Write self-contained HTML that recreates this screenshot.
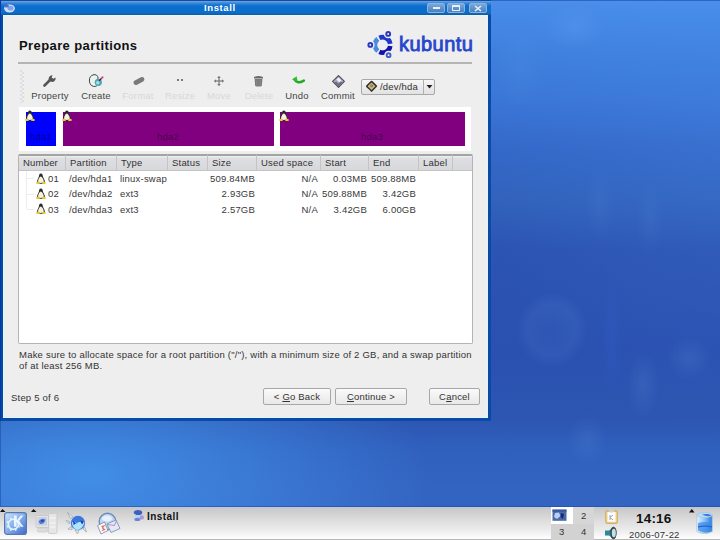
<!DOCTYPE html>
<html><head><meta charset="utf-8">
<style>
*{margin:0;padding:0;box-sizing:border-box}
html,body{width:720px;height:540px;overflow:hidden}
body{position:relative;font-family:"Liberation Sans",sans-serif;font-size:9.5px;letter-spacing:0.2px;color:#222;
background:
 radial-gradient(ellipse 340px 170px at 90px 475px, rgba(75,170,255,0.6), rgba(75,170,255,0) 100%),
 radial-gradient(ellipse 260px 300px at 740px 140px, rgba(90,160,255,0.14), rgba(90,160,255,0) 100%),
 linear-gradient(180deg,#4a8ee9 0px,#4488e6 20px,#3e7edc 60px,#3a76d6 100px,#3468c8 150px,#3162bc 200px,#2c54b2 250px,#2a50b0 350px,#2d56b2 420px,#3060be 450px,#3464c2 490px,#3464c2 540px);}
.a{position:absolute}
.t{position:absolute;white-space:nowrap;line-height:1}
#win{left:0;top:0;width:491px;height:421px;background:#0a4aa6}
#title{left:0;top:0;width:491px;height:15px;
background:linear-gradient(180deg,#1a4a90 0px,#1a4a90 1px,#6aa8f0 1px,#5096e4 2px,#2a7ed6 4px,#0a6ecc 6px,#0a6ecc 13px,#1a5aa0 14px,#1a5aa0 15px)}
#content{left:3px;top:15px;width:485px;height:403px;background:#eeeeee;border:1px solid #dcf8ff;border-top:1px solid #e0f8ff}
.tb{position:absolute;top:90px;font-size:9.5px;color:#444;text-align:center;white-space:nowrap;line-height:12px}
.dis{color:#d8d8d8}
.th{position:absolute;top:155px;height:16px;line-height:15px;color:#333;padding-left:4px;border-right:1px solid #c4c4c4;white-space:nowrap}
.row{position:absolute;left:0;width:100%;height:16px;line-height:16px;color:#383838}
.c{position:absolute;white-space:nowrap}
.r{text-align:right}
.btn{position:absolute;top:388px;height:17px;border:1px solid #a8a8a8;border-radius:2px;background:linear-gradient(180deg,#fafafa,#e8e8e8);text-align:center;line-height:15px;color:#333}
</style></head>
<body>
<svg width="0" height="0" style="position:absolute"><defs>
 <symbol id="tux" viewBox="0 0 9 10">
  <path d="M4.4 0.4 C5.7 0.4 6.1 1.6 6.1 2.8 C6.3 4.2 8.1 6.2 8.1 8.1 C8.1 9.2 6.8 9.7 4.5 9.7 C2.2 9.7 0.9 9.2 0.9 8.1 C0.9 6.2 2.5 4.2 2.7 2.8 C2.7 1.6 3.1 0.4 4.4 0.4 Z" fill="#2a2a2a"/>
  <path d="M4.3 3.2 C5.3 3.2 7 5.8 7 7.8 C7 8.8 6 9.1 4.3 9.1 C2.8 9.1 1.8 8.8 1.8 7.8 C1.8 5.8 3.3 3.2 4.3 3.2 Z" fill="#f6f2dc"/>
  <path d="M0 8.6 L2.2 7.4 L3.6 9.9 L0.4 9.9 Z M8.9 8.6 L6.8 7.4 L5.4 9.9 L8.6 9.9 Z" fill="#e6c830"/>
 </symbol>
</defs></svg>
<div class="a" style="left:0;top:0;width:720px;height:507px;pointer-events:none;background:
 radial-gradient(ellipse 34px 36px at 552px 330px, rgba(140,190,255,0.04) 0px, rgba(140,190,255,0.08) 24px, rgba(140,190,255,0) 36px),
 radial-gradient(ellipse 30px 22px at 575px 28px, rgba(140,200,255,0.12), rgba(140,200,255,0)),
 radial-gradient(ellipse 26px 40px at 520px 70px, rgba(140,200,255,0.06), rgba(140,200,255,0)),
 radial-gradient(ellipse 16px 34px at 643px 385px, rgba(140,200,255,0.10), rgba(140,200,255,0)),
 radial-gradient(ellipse 22px 22px at 689px 358px, rgba(140,200,255,0.10), rgba(140,200,255,0)),
 radial-gradient(ellipse 20px 26px at 587px 440px, rgba(140,200,255,0.09), rgba(140,200,255,0)),
 radial-gradient(ellipse 10px 60px at 612px 340px, rgba(60,110,240,0.12), rgba(60,110,240,0)),
 radial-gradient(ellipse 14px 36px at 600px 205px, rgba(140,200,255,0.06), rgba(140,200,255,0)),
 radial-gradient(ellipse 14px 36px at 650px 220px, rgba(140,200,255,0.06), rgba(140,200,255,0))"></div>
<div id="win" class="a">
 <div id="title" class="a"></div>
 <div id="content" class="a"></div>
 <div class="t" style="left:204px;top:3px;font-weight:bold;font-size:9.5px;letter-spacing:0.6px;color:#fff;">Install</div>
 <!-- title buttons -->
 <div class="a" style="left:427px;top:3px;width:18px;height:10px;border-radius:2px;background:linear-gradient(180deg,#7aa8d8,#4a80c0);border:1px solid #8ab4e0"></div>
 <div class="a" style="left:447px;top:3px;width:18px;height:10px;border-radius:2px;background:linear-gradient(180deg,#7aa8d8,#4a80c0);border:1px solid #8ab4e0"></div>
 <div class="a" style="left:469px;top:3px;width:18px;height:10px;border-radius:2px;background:linear-gradient(180deg,#7aa8d8,#4a80c0);border:1px solid #8ab4e0"></div>
 <div class="a" style="left:433px;top:7px;width:7px;height:2px;background:#e8f0f8"></div>
 <div class="a" style="left:452px;top:5px;width:8px;height:6px;border:1px solid #e8f0f8;border-top-width:2px"></div>
 <svg class="a" style="left:474px;top:5px" width="8" height="7"><path d="M1 1 L7 6 M7 1 L1 6" stroke="#e8f0f8" stroke-width="1.6"/></svg>
 <svg class="a" style="left:3px;top:3px" width="13" height="10" viewBox="0 0 13 10">
  <ellipse cx="6.5" cy="5.4" rx="5.4" ry="4" fill="#c8e0ff"/>
  <ellipse cx="7.5" cy="5.2" rx="3" ry="2.4" fill="#8aa0e0"/>
  <ellipse cx="3.6" cy="3" rx="2.4" ry="1.6" fill="#4a70c8"/>
 </svg>
 <!-- header -->
 <div class="t" style="left:19px;top:39px;font-weight:bold;font-size:13px;color:#111;letter-spacing:0.4px">Prepare partitions</div>
 <div class="a" style="left:18px;top:62px;width:454px;height:2px;background:#b4b4b4"></div>
 <!-- logo text -->
 <div class="t" style="left:399px;top:33.5px;font-weight:normal;font-size:20px;line-height:20px;letter-spacing:0.45px;color:#2848d0;-webkit-text-stroke:0.85px #2846cc">kubuntu</div>
 <svg class="a" style="left:364px;top:28px" width="36" height="32" viewBox="364 28 36 32">
  <g fill="none" stroke-width="4.6">
   <path d="M 377.86 38.83 A 7.7 7.7 0 0 0 377.86 50.97" stroke="#4a8ae0"/>
   <path d="M 379.35 37.92 A 7.7 7.7 0 0 1 390.22 43.83" stroke="#2038d0"/>
   <path d="M 390.22 45.97 A 7.7 7.7 0 0 1 379.35 51.88" stroke="#1410b0"/>
  </g>
  <g fill="#fff" stroke-width="1.7">
   <circle cx="370.3" cy="44.9" r="3.6" stroke="#eeeeee" stroke-width="1.5"/>
   <circle cx="388.2" cy="33.9" r="3.6" stroke="#eeeeee" stroke-width="1.5"/>
   <circle cx="388.6" cy="55.2" r="3.6" stroke="#eeeeee" stroke-width="1.5"/>
   <circle cx="370.3" cy="44.9" r="1.9" stroke="#2838b8" stroke-width="2"/>
   <circle cx="388.2" cy="33.9" r="1.9" stroke="#2838b8" stroke-width="2"/>
   <circle cx="388.6" cy="55.2" r="1.9" stroke="#4060c8" stroke-width="2"/>
  </g>
 </svg>
 <!-- toolbar -->
 <div class="tb" style="left:30px;width:40px">Property</div>
 <div class="tb" style="left:76px;width:40px">Create</div>
 <div class="tb dis" style="left:118px;width:40px">Format</div>
 <div class="tb dis" style="left:160px;width:40px">Resize</div>
 <div class="tb dis" style="left:199px;width:40px">Move</div>
 <div class="tb dis" style="left:239px;width:40px">Delete</div>
 <div class="tb" style="left:277px;width:40px">Undo</div>
 <div class="tb" style="left:318px;width:40px">Commit</div>
 <!-- combobox -->
 <div class="a" style="left:361px;top:79px;width:74px;height:16px;border:1px solid #a8a8a8;border-radius:2px;background:linear-gradient(180deg,#f6f6f6,#e2e2e2)"></div>
 <div class="a" style="left:423px;top:80px;width:1px;height:14px;background:#b0b0b0"></div>
 <div class="t" style="left:380px;top:82px;color:#333">/dev/hda</div>

 <!-- toolbar handle -->
 <div class="a" style="left:20px;top:70px;width:4px;height:33px;background-image:radial-gradient(circle at 1px 1px,#dedede 0.9px,transparent 1.1px),radial-gradient(circle at 3px 3px,#dedede 0.9px,transparent 1.1px);background-size:4px 4px"></div>
 <!-- wrench -->
 <svg class="a" style="left:43px;top:74px" width="14" height="13" viewBox="0 0 14 13">
  <path d="M1.5 11.5 L7 6" stroke="#555" stroke-width="2.6" stroke-linecap="round"/>
  <path d="M6.2 6.8 A3.6 3.6 0 0 1 9.6 1.2 L8.6 3.4 L10.3 4.8 L12.6 3.6 A3.6 3.6 0 0 1 7.6 7.6 Z" fill="#555"/>
 </svg>
 <!-- create -->
 <svg class="a" style="left:88px;top:73px" width="17" height="15" viewBox="0 0 17 15">
  <path d="M3.6 2.6 Q6 0.8 8.4 2 Q10.4 3.2 10 6 L10.2 10.5 Q9 14 5.6 13.4 Q3 13 2 10.6 Q1 8.2 1.6 5.4 Q2 3.6 3.6 2.6 Z" fill="#eaf4ec" stroke="#454545" stroke-width="1"/>
  <circle cx="10.3" cy="9.3" r="3.6" fill="#4aa8b8"/>
  <circle cx="9.8" cy="9.8" r="1.8" fill="#a0e0e6"/>
  <path d="M11.6 7.2 L14.6 4.2" stroke="#6a1a3a" stroke-width="1.6" stroke-linecap="round"/>
  <circle cx="14.2" cy="4.6" r="1.6" fill="#e8a0b8" opacity="0.5"/>
 </svg>
 <!-- format (disabled eraser) -->
 <svg class="a" style="left:132px;top:76px" width="14" height="10" viewBox="0 0 14 10">
  <rect x="1.2" y="2.6" width="11.6" height="4.8" rx="2.4" transform="rotate(-28 7 5)" fill="#7a7a7a"/>
 </svg>
 <!-- resize dots -->
 <div class="a" style="left:177px;top:79px;width:2px;height:2px;background:#7a7a7a"></div>
 <div class="a" style="left:181px;top:79px;width:2px;height:2px;background:#7a7a7a"></div>
 <!-- move -->
 <svg class="a" style="left:213px;top:75px" width="12" height="12" viewBox="0 0 12 12">
  <g fill="#787878">
   <path d="M6 0.8 L7.8 3 L4.2 3 Z"/><path d="M6 11.2 L7.8 9 L4.2 9 Z"/><path d="M0.8 6 L3 4.2 L3 7.8 Z"/><path d="M11.2 6 L9 4.2 L9 7.8 Z"/>
   <rect x="5.4" y="3" width="1.2" height="6"/><rect x="3" y="5.4" width="6" height="1.2"/>
  </g>
 </svg>
 <!-- trash -->
 <svg class="a" style="left:253px;top:75px" width="11" height="12" viewBox="0 0 11 12">
  <path d="M1 2 Q5.5 0 10 2 L10 3.4 L1 3.4 Z" fill="#6c6c6c"/>
  <path d="M1.6 4 L9.4 4 L8.8 11 Q5.5 12.2 2.2 11 Z" fill="#7a7a7a"/>
  <path d="M3.8 5 L4 10.5 M7.2 5 L7 10.5" stroke="#8e8e8e" stroke-width="0.8"/>
 </svg>
 <!-- undo -->
 <svg class="a" style="left:291px;top:75px" width="14" height="10" viewBox="0 0 14 10">
  <path d="M3.5 4.5 Q6 9.5 12.8 5.6" fill="none" stroke="#22a822" stroke-width="2.6" stroke-linecap="round"/>
  <path d="M1 4.6 L5.6 1.2 L6.8 6.8 Z" fill="#2cc02c"/>
 </svg>
 <!-- commit (diamond floppy) -->
 <svg class="a" style="left:332px;top:75px" width="13" height="13" viewBox="0 0 13 13">
  <path d="M6.5 0.6 L12.4 6.4 L6.5 12.4 L0.6 6.4 Z" fill="#a8a8c4" stroke="#505058" stroke-width="1.2" stroke-linejoin="round"/>
  <path d="M6.6 2.4 L9.6 5.4 L7.4 7.6 L4.4 4.6 Z" fill="#f0f0fa"/>
  <path d="M2.6 7.6 L6.5 11.4 L10.4 7.6 L8.6 6.4 L6.2 8.8 L4.2 6.6 Z" fill="#6a6a80"/>
 </svg>
 <!-- combobox hd icon -->
 <svg class="a" style="left:365px;top:80px" width="13" height="13" viewBox="0 0 13 13">
  <path d="M6.5 0.8 Q6.9 0.6 7.4 1.1 L11.9 5.6 Q12.4 6.1 11.9 6.8 L7.2 11.6 Q6.6 12.2 5.9 11.6 L1.2 6.9 Q0.6 6.3 1.2 5.6 L5.8 1.1 Z" fill="#3a3428"/>
  <path d="M6.5 2.4 L10.4 6.2 L6.5 10 L2.6 6.2 Z" fill="#cbbb90"/>
  <circle cx="6.6" cy="5.8" r="1.6" fill="#9a8450"/>
  <path d="M2.4 8.4 L5.6 11.4" stroke="#e8e8e8" stroke-width="0.8" opacity="0.6"/>
 </svg>
 <svg class="a" style="left:426px;top:85px" width="7" height="4" viewBox="0 0 7 4"><path d="M0.5 0 L6.5 0 L3.5 3.5 Z" fill="#222"/></svg>
 <!-- partition bar -->
 <div class="a" style="left:19px;top:107px;width:452px;height:44px;background:#fff"></div>
 <div class="a" style="left:26px;top:112px;width:30px;height:34px;background:#0000ff"></div>
 <div class="a" style="left:63px;top:112px;width:211px;height:34px;background:#800080"></div>
 <div class="a" style="left:280px;top:112px;width:185px;height:34px;background:#800080"></div>
 <div class="t" style="left:30px;top:132px;color:rgba(0,0,60,0.55)">hda1</div>
 <div class="t" style="left:157px;top:132px;color:rgba(40,0,40,0.6)">hda2</div>
 <div class="t" style="left:361px;top:132px;color:rgba(40,0,40,0.6)">hda3</div>
 <!-- table -->
 <div class="a" style="left:18px;top:154px;width:455px;height:190px;background:#fff;border:1px solid #b4b4b4;border-top:2px solid #a4a4a4;border-radius:2px"></div>
 <div class="a" style="left:19px;top:156px;width:453px;height:15px;background:linear-gradient(180deg,#eaecea 0px,#eaecea 1px,#dfdfe3 2px,#d6d8da 14px);border-bottom:1px solid #c4c4c4"></div>
 <div class="th" style="left:19px;width:47px">Number</div>
 <div class="th" style="left:66px;width:51px">Partition</div>
 <div class="th" style="left:117px;width:51px">Type</div>
 <div class="th" style="left:168px;width:40px">Status</div>
 <div class="th" style="left:208px;width:49px">Size</div>
 <div class="th" style="left:257px;width:64px">Used space</div>
 <div class="th" style="left:321px;width:48px">Start</div>
 <div class="th" style="left:369px;width:50px">End</div>
 <div class="th" style="left:419px;width:34px">Label</div>
 <div class="th" style="left:453px;width:19px;border-right:none"></div>
 <div class="a" style="left:0;top:171px;width:491px;height:50px">
  <div class="row" style="top:0">
   <span class="c" style="left:48px">01</span><span class="c" style="left:69px">/dev/hda1</span><span class="c" style="left:120px">linux-swap</span>
   <span class="c r" style="left:200px;width:55px">509.84MB</span><span class="c r" style="left:260px;width:58px">N/A</span>
   <span class="c r" style="left:320px;width:47px">0.03MB</span><span class="c r" style="left:368px;width:48px">509.88MB</span>
  </div>
  <div class="row" style="top:15px">
   <span class="c" style="left:48px">02</span><span class="c" style="left:69px">/dev/hda2</span><span class="c" style="left:120px">ext3</span>
   <span class="c r" style="left:200px;width:55px">2.93GB</span><span class="c r" style="left:260px;width:58px">N/A</span>
   <span class="c r" style="left:320px;width:47px">509.88MB</span><span class="c r" style="left:368px;width:48px">3.42GB</span>
  </div>
  <div class="row" style="top:31px">
   <span class="c" style="left:48px">03</span><span class="c" style="left:69px">/dev/hda3</span><span class="c" style="left:120px">ext3</span>
   <span class="c r" style="left:200px;width:55px">2.57GB</span><span class="c r" style="left:260px;width:58px">N/A</span>
   <span class="c r" style="left:320px;width:47px">3.42GB</span><span class="c r" style="left:368px;width:48px">6.00GB</span>
  </div>
 </div>

 <!-- tree lines + tux -->
 <div class="a" style="left:26px;top:171px;width:1px;height:38px;border-left:1px solid #ececec"></div>
 <div class="a" style="left:27px;top:178px;width:7px;height:1px;border-top:1px solid #ececec"></div>
 <div class="a" style="left:27px;top:194px;width:7px;height:1px;border-top:1px solid #ececec"></div>
 <div class="a" style="left:27px;top:209px;width:7px;height:1px;border-top:1px solid #ececec"></div>
 <svg class="a" style="left:36px;top:173px" width="10" height="11"><use href="#tux" width="10" height="11"/></svg>
 <svg class="a" style="left:36px;top:188px" width="10" height="11"><use href="#tux" width="10" height="11"/></svg>
 <svg class="a" style="left:36px;top:203px" width="10" height="11"><use href="#tux" width="10" height="11"/></svg>
 <svg class="a" style="left:25px;top:110px" width="10" height="11"><use href="#tux" width="10" height="11"/></svg>
 <svg class="a" style="left:62px;top:110px" width="10" height="11"><use href="#tux" width="10" height="11"/></svg>
 <svg class="a" style="left:279px;top:110px" width="10" height="11"><use href="#tux" width="10" height="11"/></svg>
 <!-- info text -->
 <div class="t" style="left:19px;top:349px;color:#333;line-height:11px;letter-spacing:0.22px">Make sure to allocate space for a root partition ("/"), with a minimum size of 2 GB, and a swap partition<br>of at least 256 MB.</div>
 <div class="t" style="left:11px;top:393px;color:#333">Step 5 of 6</div>
 <div class="btn" style="left:263px;width:68px">&lt; <u>G</u>o Back</div>
 <div class="btn" style="left:335px;width:72px"><u>C</u>ontinue &gt;</div>
 <div class="btn" style="left:429px;width:51px">C<u>a</u>ncel</div>
</div>
<div class="a" style="left:0;top:0;width:1px;height:421px;background:#0838a0"></div>
<div class="a" style="left:491px;top:0;width:229px;height:1px;background:rgba(20,70,170,0.55)"></div>
<div class="a" style="left:0;top:421px;width:1px;height:85px;background:rgba(20,70,170,0.5)"></div>
<!-- taskbar -->
<div class="a" style="left:0;top:506px;width:720px;height:1px;background:rgba(30,70,150,0.5)"></div>
<div class="a" style="left:0;top:507px;width:720px;height:33px;background:linear-gradient(180deg,#bcc6dc 0px,#c8c8c8 1.5px,#cacaca 2px,#d4d4d4 8px,#e0e0e0 15px,#ececec 23px,#f6f6f6 28px,#fcfcfc 31px,#fcfcfc 32px,#b8b8b8 32px)"></div>
<div class="t" style="left:147px;top:512px;font-weight:bold;font-size:10px;letter-spacing:0.45px;color:#111">Install</div>
<div class="a" style="left:551px;top:507px;width:22px;height:17px;background:#fff"></div>
<div class="a" style="left:573px;top:507px;width:21px;height:17px;background:#d6d6d6"></div>
<div class="a" style="left:551px;top:524px;width:22px;height:16px;background:#d2d2d2"></div>
<div class="a" style="left:573px;top:524px;width:21px;height:16px;background:#d2d2d2"></div>
<div class="t" style="left:581px;top:511px;color:#333">2</div>
<div class="t" style="left:559px;top:527px;color:#333">3</div>
<div class="t" style="left:581px;top:527px;color:#333">4</div>
<div class="t" style="left:636px;top:512px;font-weight:bold;font-size:13.5px;color:#111">14:16</div>
<div class="t" style="left:629px;top:530px;color:#333">2006-07-22</div>
<!-- taskbar icons -->
<svg class="a" style="left:0;top:509px" width="6" height="3"><path d="M0 3 L2.5 0 L5.5 3 Z" fill="#111"/></svg>
<svg class="a" style="left:31px;top:509px" width="6" height="3"><path d="M0 3 L2.5 0 L5.5 3 Z" fill="#111"/></svg>
<svg class="a" style="left:4px;top:512px" width="23" height="23" viewBox="0 0 23 23">
 <defs><linearGradient id="kg" x1="0" y1="0" x2="1" y2="1"><stop offset="0" stop-color="#d0e4fc"/><stop offset="0.45" stop-color="#8cb4ec"/><stop offset="1" stop-color="#3a68cc"/></linearGradient></defs>
 <rect x="0.6" y="0.6" width="21.8" height="21.8" rx="2.5" fill="url(#kg)" stroke="#5a78b0" stroke-width="1.2"/>
 <g fill="#eaf6ff">
  <circle cx="9.3" cy="12.3" r="5" fill="none" stroke="#e2f4ff" stroke-width="1.6"/>
  <path d="M14.82 13.22 L16.32 15.21 L13.86 15.55 Z M12.55 16.86 L12.21 19.32 L10.22 17.82 Z M8.38 17.82 L6.39 19.32 L6.05 16.86 Z M4.74 15.55 L2.28 15.21 L3.78 13.22 Z M3.78 11.38 L2.28 9.39 L4.74 9.05 Z M6.05 7.74 L6.39 5.28 L8.38 6.78 Z M10.22 6.78 L12.21 5.28 L12.55 7.74 Z M13.86 9.05 L16.32 9.39 L14.82 11.38 Z "/>
  <path d="M9.9 3.4 L12.7 3.4 L12.7 8.6 L16.8 3.4 L19.4 3.4 L15 9 L19.6 14.8 L16.8 14.8 L12.7 9.8 L12.7 14.8 L9.9 14.8 Z"/>
 </g>
</svg>
<svg class="a" style="left:35px;top:513px" width="23" height="21" viewBox="0 0 23 21">
 <rect x="1" y="2.5" width="12.5" height="12" rx="1" fill="#e4e4e4" stroke="#c4c4c4" stroke-width="0.8"/>
 <rect x="2.5" y="4" width="9.5" height="8.5" fill="#c4d0ea"/>
 <path d="M3.5 8.5 Q6 4.5 10.5 6.5 Q9.5 11.5 5 11 Z" fill="#5a78c8"/>
 <path d="M6 7 Q8 6 9 8 Q7.5 9.5 6 8.6 Z" fill="#2a48a8"/>
 <rect x="2.5" y="15" width="10" height="4" rx="1" fill="#dcdcdc" stroke="#c8c8c8" stroke-width="0.6"/>
 <rect x="13.5" y="0.5" width="8.5" height="20" rx="1.2" fill="#e6e6e6" stroke="#c8c8c8" stroke-width="0.8"/>
 <path d="M15 5 L20.5 5 M15 10 L20.5 10 M15 14 L20.5 14" stroke="#f8f8f8" stroke-width="1.2"/>
</svg>
<svg class="a" style="left:65px;top:511px" width="24" height="24" viewBox="0 0 24 24">
 <g fill="#e8eef4" stroke="#a0a8b0" stroke-width="0.8">
  <path d="M2.5 1.5 L8 6 L5.5 7.5 Z"/><path d="M1 9.5 L5 10.5 L4.2 13 Z"/><path d="M3 18 L6.5 15.5 L7.2 18.5 Z"/>
  <path d="M10 19 L12.5 23 L14 19.2 Z"/><path d="M18 18 L21.5 21 L19.6 16 Z"/>
 </g>
 <circle cx="13" cy="12" r="7.2" fill="#3a78e0"/>
 <path d="M6.8 12 Q9 9 11.5 12.5 Q13 10.5 15 11 Q17 9 19.5 11.5 Q18 17.5 13 19 Q8 18.5 6.8 12 Z" fill="#b0e4fa"/>
 <path d="M8 9.5 L11 12.5 L8.5 14 Z M15 9.5 L19 10.5 L17 13.5 Z" fill="#1a3ab0"/>
</svg>
<svg class="a" style="left:96px;top:512px" width="25" height="23" viewBox="0 0 25 23">
 <circle cx="11.5" cy="9.5" r="8.3" fill="#c0d8f0" stroke="#6a8cb8" stroke-width="1.4"/>
 <ellipse cx="11" cy="6.5" rx="5" ry="3" fill="#e8f2fc"/>
 <path d="M1.5 13.5 L8.5 10 L12 18.5 L5 22 Z" fill="#f6f6fa" stroke="#7a8aa8" stroke-width="0.8"/>
 <path d="M5.5 14.5 L8 14 L6.5 16 L8.5 17.5 L6 18.5" fill="none" stroke="#e07060" stroke-width="1.2"/>
 <path d="M11 12 L20 8 L24 16.5 L15 20.5 Z" fill="#e4e8f8" stroke="#7a8aa8" stroke-width="0.8"/>
 <path d="M11.5 12.5 L18.5 13.5 L20.5 8.5" fill="none" stroke="#a08ac0" stroke-width="0.9"/>
</svg>
<svg class="a" style="left:132px;top:509px" width="13" height="13" viewBox="0 0 13 13">
 <ellipse cx="6" cy="3.6" rx="4.2" ry="2.6" fill="#4060c0"/>
 <path d="M1.8 4.4 Q5 7 9.2 6 L8.8 9.2 Q5 10.2 2.6 8.2 Z" fill="#b8d4f6"/>
 <ellipse cx="5.4" cy="10.4" rx="3" ry="1.6" fill="#6a84d0"/>
 <circle cx="9.8" cy="8.4" r="2.2" fill="#a898e0"/>
</svg>
<svg class="a" style="left:552px;top:509px" width="15" height="12" viewBox="0 0 15 12">
 <rect x="0.5" y="0.8" width="14" height="11" fill="#4a6aa8"/>
 <rect x="0.5" y="0.5" width="14" height="2.2" fill="#3858a0"/>
 <path d="M3 4 L7 3.5 L8.5 7 L5 10 L2 8 Z" fill="#b8d0f4"/>
 <path d="M9 4 L12 5 L11 10 L8.5 8 Z" fill="#1a2a70"/>
</svg>
<svg class="a" style="left:605px;top:509px" width="13" height="15" viewBox="0 0 13 15">
 <rect x="0.8" y="2" width="11.4" height="12.2" rx="1.5" fill="#f6e8b8" stroke="#d6b060" stroke-width="1.4"/>
 <rect x="3" y="3" width="7" height="9.5" fill="#ffffff"/>
 <rect x="4" y="0.5" width="5" height="3" rx="1" fill="#d0d0d0"/>
 <path d="M5 6 L5 11 M5 8.5 L8 6 M5 8.5 L8 11" stroke="#a0a0b0" stroke-width="1"/>
</svg>
<svg class="a" style="left:604px;top:526px" width="14" height="14" viewBox="0 0 14 14">
 <path d="M1 4.5 L5 4.5 L10 0.5 L10 13.5 L5 9.5 L1 9.5 Z" fill="#2a8a9a"/>
 <ellipse cx="9.5" cy="7" rx="3.2" ry="6.2" fill="#3a4a50"/>
 <ellipse cx="9.8" cy="7" rx="2" ry="4.2" fill="#c8e0e4"/>
</svg>
<svg class="a" style="left:689px;top:509px" width="6" height="4"><path d="M0 3.5 L2.8 0 L5.6 3.5 Z" fill="#111"/></svg>
<svg class="a" style="left:696px;top:512px" width="17" height="23" viewBox="0 0 17 23">
 <defs><linearGradient id="tg" x1="0" y1="0" x2="1" y2="0"><stop offset="0" stop-color="#e4f6ff"/><stop offset="0.5" stop-color="#88c4f4"/><stop offset="1" stop-color="#2a74e0"/></linearGradient></defs>
 <path d="M0.8 3 L0.8 19.5 Q8.5 23.5 16.2 19.5 L16.2 3 Z" fill="url(#tg)" stroke="#a8c4dc" stroke-width="0.8"/>
 <ellipse cx="8.5" cy="3" rx="7.7" ry="2.5" fill="#b8dcf8" stroke="#a8c4dc" stroke-width="0.8"/>
 <path d="M6 2.8 Q11 1 15.5 3.4 Q12 5.2 6 2.8 Z" fill="#2a78e0"/>
 <path d="M2 11 Q9 9 16 11 L16 18.5 Q9 22 2 18.5 Z" fill="#3c8ae8" opacity="0.75"/>
 <path d="M2 15 Q9 13 16 15" stroke="#1a5ad0" stroke-width="1.2" fill="none"/>
</svg>
</body></html>
